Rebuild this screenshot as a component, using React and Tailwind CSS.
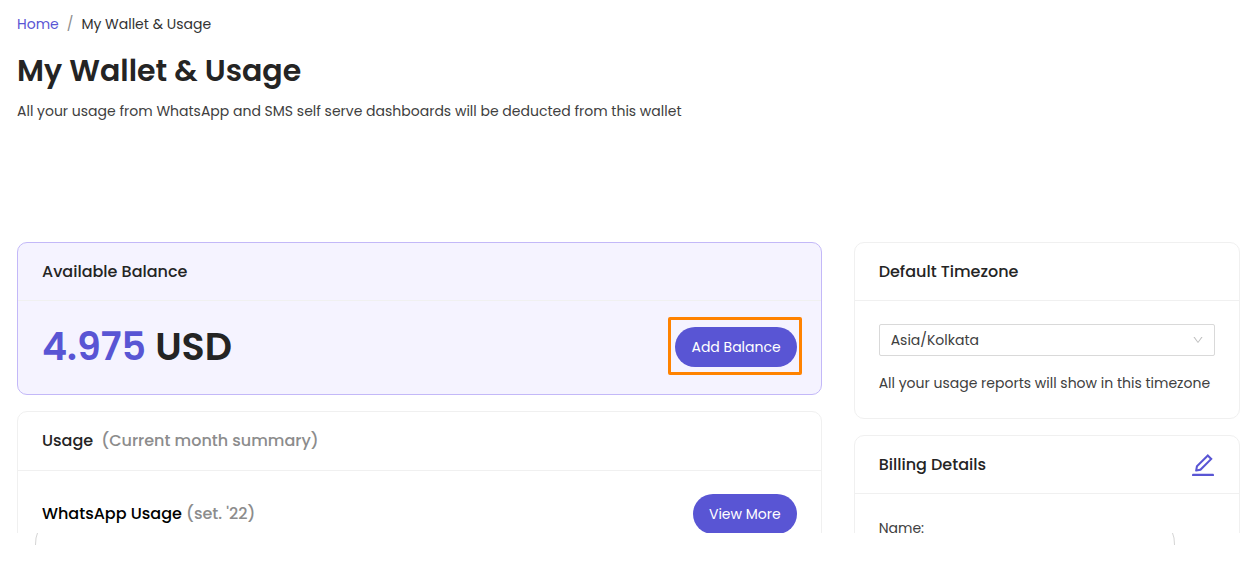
import React, { useState } from 'react';
import { AiOutlineDown, AiOutlineEdit } from 'react-icons/ai';

const timezones = ['Asia/Kolkata', 'Asia/Dubai', 'Europe/London', 'America/New_York'];

const Card = ({ title, extra, className = 'border-[#f0f0f0] bg-white', headerClass = 'h-[58px]', children }) => (
  <section className={`rounded-[10px] border ${className}`}>
    <header className={`flex items-center justify-between border-b border-[#f0f0f0] px-6 ${headerClass}`}>
      <h2 className="text-base font-medium text-[#242424]">{title}</h2>
      {extra}
    </header>
    {children}
  </section>
);

const PillButton = ({ children }) => (
  <button type="button" className="h-10 rounded-full bg-[#5955d4] px-4 text-sm text-white">
    {children}
  </button>
);

const App = () => {
  const [timezone, setTimezone] = useState(timezones[0]);

  return (
    <div className="min-h-screen bg-white font-['Poppins','Inter',sans-serif] text-sm text-[#404040]">
      <main className="h-[calc(100vh-46px)] overflow-hidden pt-3 pr-1 pl-[17px]">
        <nav aria-label="Breadcrumb" className="flex gap-2 leading-6">
          <a href="#home" className="text-[#5955d4]">Home</a>
          <span className="text-[#8c8c8c]">/</span>
          <span className="text-[#333333]">My Wallet &amp; Usage</span>
        </nav>

        <h1 className="mt-3 text-3xl leading-[46px] font-semibold text-[#242424]">My Wallet &amp; Usage</h1>
        <p className="mt-1.5 leading-[22px]">
          All your usage from WhatsApp and SMS self serve dashboards will be deducted from this wallet
        </p>

        <div className="mt-[120px] grid grid-cols-3 items-start gap-8">
          <div className="col-span-2 flex flex-col gap-4">
            <Card title="Available Balance" className="border-[#c3b8f8] bg-[#f5f3ff]">
              <div className="flex items-center justify-between px-6 pt-6 pb-[25px]">
                <p className="text-[38px] leading-[44px] font-semibold text-[#242424]">
                  <span className="text-[#5955d4]">4.975</span> USD
                </p>
                <div className="relative">
                  <PillButton>Add Balance</PillButton>
                  <span className="pointer-events-none absolute -top-2.5 -right-[5px] -bottom-2 -left-[7px] rounded-xs border-3 border-[#ff8200]" />
                </div>
              </div>
            </Card>

            <Card
              headerClass="h-[59px]"
              title={
                <>
                  Usage <span className="ml-1 text-[#8c8c8c]">(Current month summary)</span>
                </>
              }
            >
              <div className="flex items-center justify-between px-6 py-[23px]">
                <h3 className="text-base font-medium text-black">
                  WhatsApp Usage <span className="text-[#8c8c8c]">(set. '22)</span>
                </h3>
                <PillButton>View More</PillButton>
              </div>
            </Card>
          </div>

          <div className="flex flex-col gap-4">
            <Card title="Default Timezone">
              <div className="px-6 pt-[23px] pb-6">
                <div className="relative">
                  <select
                    aria-label="Default Timezone"
                    value={timezone}
                    onChange={(e) => setTimezone(e.target.value)}
                    className="h-8 w-full appearance-none rounded-xs border border-[#d9d9d9] bg-white px-[11px]"
                  >
                    {timezones.map((tz) => (
                      <option key={tz}>{tz}</option>
                    ))}
                  </select>
                  <AiOutlineDown className="pointer-events-none absolute top-2.5 right-[11px] size-3 text-[#bfbfbf]" />
                </div>
                <p className="mt-4 leading-[22px]">All your usage reports will show in this timezone</p>
              </div>
            </Card>

            <Card
              title="Billing Details"
              extra={
                <button type="button" aria-label="Edit billing details" className="-mr-0.5 text-[#5955d4]">
                  <AiOutlineEdit className="size-7" />
                </button>
              }
            >
              <div className="px-6 py-[23px]">
                <p className="leading-[22px]">Name:</p>
              </div>
            </Card>
          </div>
        </div>
      </main>

      {/* edges of the next panel */}
      <div className="flex justify-between pr-[68px] pl-[34px]">
        <svg viewBox="0 0 4 12" className="h-3 w-1" fill="none" stroke="#d4d4d4" aria-hidden="true">
          <path d="M3.5 0Q1.5 4 1.5 12" />
        </svg>
        <svg viewBox="0 0 4 12" className="h-3 w-1" fill="none" stroke="#d4d4d4" aria-hidden="true">
          <path d="M.5 0Q2.5 4 2.5 12" />
        </svg>
      </div>
    </div>
  );
};

export default App;
